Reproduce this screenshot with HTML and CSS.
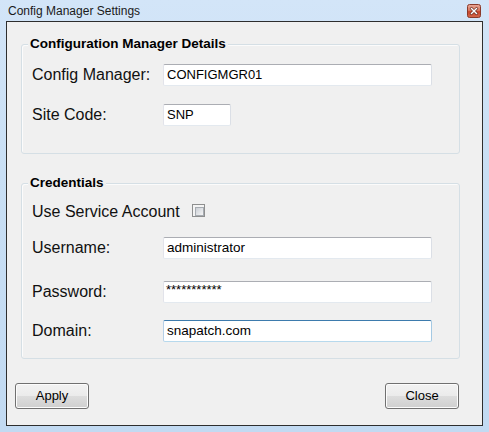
FILE: index.html
```html
<!DOCTYPE html>
<html>
<head>
<meta charset="utf-8">
<link rel="stylesheet" href="styles.css">
</head>
<body>
<div class="window">
  <div class="titlebar">
    <span class="title">Config Manager Settings</span>
    <div class="close-btn">
      <svg width="14" height="14" viewBox="0 0 14 14">
        <defs>
          <linearGradient id="cg" x1="0" y1="0" x2="0" y2="1">
            <stop offset="0" stop-color="#e9a99a"/>
            <stop offset="0.45" stop-color="#d97a62"/>
            <stop offset="0.55" stop-color="#c8452a"/>
            <stop offset="1" stop-color="#d3694c"/>
          </linearGradient>
        </defs>
        <rect x="0.5" y="0.5" width="13" height="13" rx="2" fill="url(#cg)" stroke="#8a3a2a"/>
        <path d="M4.5 4.5 L9.5 9.5 M9.5 4.5 L4.5 9.5" stroke="#5a1d12" stroke-width="2.6" stroke-linecap="square"/>
        <path d="M4.5 4.5 L9.5 9.5 M9.5 4.5 L4.5 9.5" stroke="#ffffff" stroke-width="1.5" stroke-linecap="square"/>
      </svg>
    </div>
  </div>
  <div class="client">
    <div class="group group-cm">
      <div class="legend">Configuration Manager Details</div>
      <div class="row row-cm"><span class="label">Config Manager:</span><div class="textbox wide">CONFIGMGR01</div></div>
      <div class="row row-sc"><span class="label">Site Code:</span><div class="textbox short">SNP</div></div>
    </div>
    <div class="group group-cred">
      <div class="legend">Credentials</div>
      <div class="row row-usa"><span class="label-auto">Use Service Account</span><div class="checkbox"><div class="checkbox-inner"></div></div></div>
      <div class="row row-user"><span class="label">Username:</span><div class="textbox wide lower">administrator</div></div>
      <div class="row row-pass"><span class="label">Password:</span><div class="textbox wide pass">***********</div></div>
      <div class="row row-dom"><span class="label">Domain:</span><div class="textbox wide lower focused">snapatch.com</div></div>
    </div>
    <div class="buttons">
      <div class="btn">Apply</div>
      <div class="btn">Close</div>
    </div>
  </div>
</div>
</body>
</html>
```

FILE: styles.css
```css
html, body {
  margin: 0;
  padding: 0;
}
body {
  width: 489px;
  height: 432px;
  overflow: hidden;
  font-family: "Liberation Sans", Arial, sans-serif;
}
.window {
  width: 489px;
  height: 432px;
  box-sizing: border-box;
  background: linear-gradient(to bottom, #d3e5f8 0%, #c9dff4 40%, #c2daf2 100%);
  display: flex;
  flex-direction: column;
}
.titlebar {
  height: 21px;
  display: flex;
  align-items: center;
  padding-left: 8px;
  padding-right: 8px;
}
.title {
  flex: 1;
  font-size: 12px;
  color: #1a1a1a;
  line-height: 14px;
  margin-top: 1px;
}
.close-btn {
  width: 14px;
  height: 14px;
  margin-top: 1px;
}
.close-btn svg {
  display: block;
}
.client {
  margin: 0 6px;
  width: 477px;
  height: 405px;
  box-sizing: border-box;
  border: 1px solid #2e2e2e;
  background: #f0f0f0;
  display: flex;
  flex-direction: column;
}
.group {
  margin-left: 14px;
  width: 439px;
  box-sizing: border-box;
  border: 1px solid #d5dfe5;
  border-radius: 3px;
  padding-left: 10px;
  box-shadow: inset 1px 1px 0 #fbfbfb;
}
.group-cm {
  margin-top: 22px;
  height: 110px;
}
.group-cred {
  margin-top: 29px;
  height: 176px;
}
.legend {
  width: fit-content;
  height: 16px;
  line-height: 16px;
  margin-top: -9px;
  margin-left: -4px;
  padding: 0 2px;
  background: #f0f0f0;
  font-weight: bold;
  font-size: 13.5px;
  color: #000;
}
.row {
  display: flex;
  align-items: center;
  height: 22px;
}
.row-cm { margin-top: 12px; }
.row-sc { margin-top: 18px; }
.row-usa { margin-top: 10px; }
.row-user { margin-top: 14px; }
.row-pass { margin-top: 22px; }
.row-dom { margin-top: 17px; }
.label {
  width: 131px;
  font-size: 16px;
  color: #111;
}
.label-auto {
  font-size: 16px;
  color: #111;
}
.textbox {
  height: 22px;
  box-sizing: border-box;
  border: 1px solid;
  border-color: #abadb3 #dbdfe6 #e3e9ef #e2e3ea;
  border-radius: 2px;
  background: #ffffff;
  font-size: 13px;
  line-height: 20px;
  padding-left: 3px;
  color: #000;
  white-space: nowrap;
}
.textbox.lower { font-size: 13.5px; }
.textbox.wide { width: 269px; }
.textbox.short { width: 68px; }
.textbox.pass {
  font-size: 13px;
  line-height: 16px;
  padding-left: 2px;
}
.textbox.focused {
  border-color: #3d7bad #a4c9e3 #b7d9ed #b5cfe7;
}
.checkbox {
  width: 13px;
  height: 13px;
  box-sizing: border-box;
  border: 1px solid #8e8f8f;
  background: #f4f4f4;
  margin-left: 12px;
  margin-bottom: 3px;
  padding: 2px;
}
.checkbox-inner {
  width: 7px;
  height: 7px;
  border: 1px solid #a7acb2;
  background: linear-gradient(135deg, #cbcfd5 0%, #e4e6e9 60%, #f4f4f4 100%);
}
.buttons {
  margin-top: 24px;
  margin-left: 8px;
  width: 444px;
  display: flex;
  justify-content: space-between;
}
.btn {
  width: 74px;
  height: 26px;
  box-sizing: border-box;
  border: 1px solid #707070;
  border-radius: 3px;
  background: linear-gradient(to bottom, #f2f2f2 0%, #ebebeb 50%, #dddddd 51%, #cfcfcf 100%);
  box-shadow: inset 0 0 0 1px #fcfcfc;
  font-size: 13px;
  line-height: 24px;
  text-align: center;
  color: #000;
}
```
